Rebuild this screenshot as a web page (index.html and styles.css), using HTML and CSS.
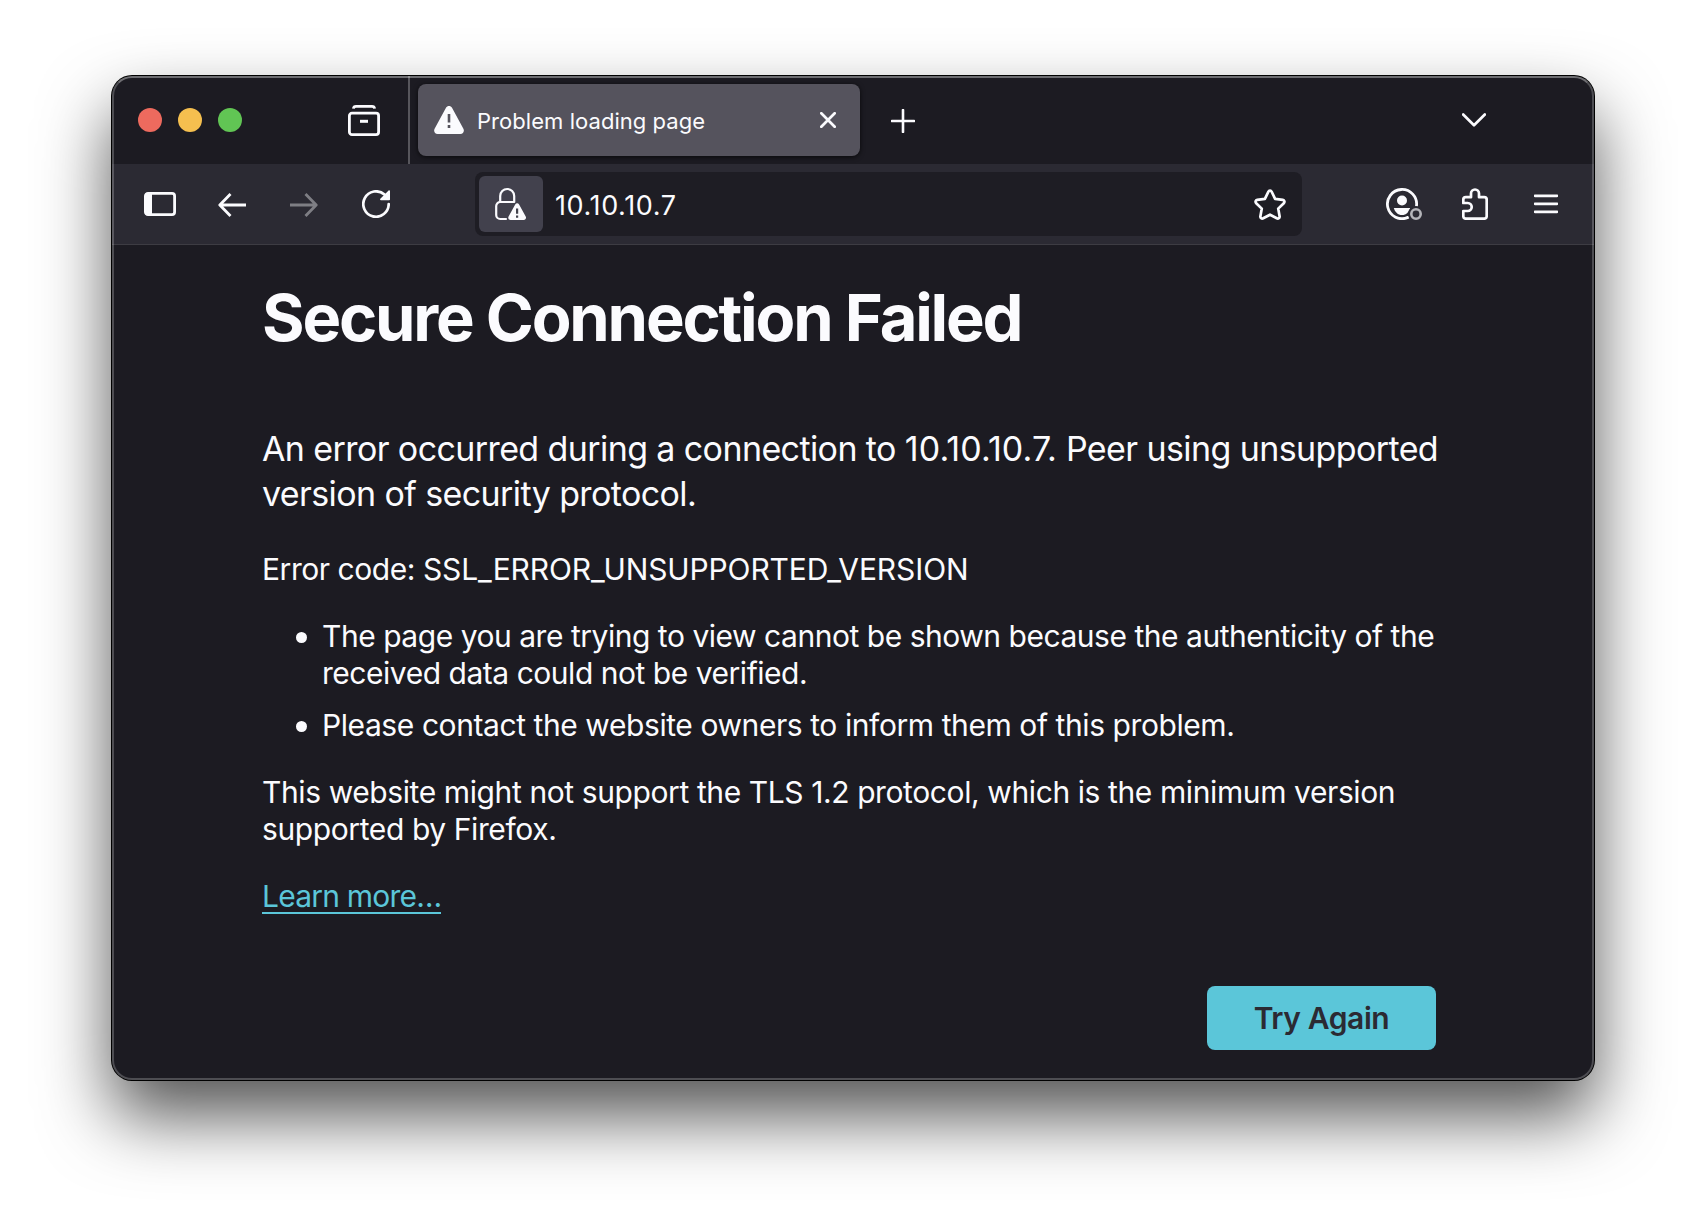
FILE: index.html
```html
<!DOCTYPE html>
<html lang="en">
<head>
<meta charset="utf-8">
<title>Problem loading page</title>
<link rel="stylesheet" href="styles.css">
</head>
<body>
<div class="window">
  <header class="tabbar">
    <div class="lights"><i class="light red"></i><i class="light yellow"></i><i class="light green"></i></div>
    <svg class="icon view" width="32" height="32" viewBox="0 0 32 32"><path d="M5.400 4.600C5.600 3.200 6.500 2.400 8 2.400h16c1.500 0 2.400.8 2.600 2.200" /><rect x="1.400" y="9.200" width="29.200" height="21.400" rx="2.600"/><path d="M12 17.300h8" stroke-width="3"/></svg>
    <div class="separator"></div>
    <div class="tab">
      <svg class="warn" width="30" height="28" viewBox="0 0 30 28"><path class="solid" d="M12 1.800c1.300-2.400 4.700-2.400 6 0l11.400 20.900c1.300 2.500-.2 5.300-3 5.300H3.600c-2.800 0-4.300-2.800-3-5.300z"/><path class="mark" d="M15 8v8.500M15 19v3"/></svg>
      <span class="tab-title">Problem loading page</span>
      <svg class="icon close" width="16" height="16" viewBox="0 0 16 16"><path d="M1.300 1.300l13.400 13.400M14.700 1.300L1.300 14.700"/></svg>
    </div>
    <svg class="icon plus" width="24" height="24" viewBox="0 0 24 24"><path d="M12 1v22M1 12h22"/></svg>
    <svg class="icon chevron" width="24" height="14" viewBox="0 0 24 14"><path d="M1.200 1.500L12 12.200 22.800 1.500"/></svg>
  </header>
  <nav class="toolbar">
    <svg class="icon sidebar" width="32" height="24" viewBox="0 0 32 24"><rect x="1.400" y="1.400" width="29.200" height="21.200" rx="2.600"/><path class="solid" d="M3 1h5v22H3a2 2 0 0 1-2-2V3a2 2 0 0 1 2-2z"/></svg>
    <svg class="icon back" width="28" height="26" viewBox="0 0 28 26"><path d="M28 13H1.800M12.500 2L1.800 13l10.700 11"/></svg>
    <svg class="icon forward" width="28" height="26" viewBox="0 0 28 26"><path d="M0 13h26.200M15.500 2l10.700 11-10.700 11"/></svg>
    <svg class="icon reload" width="28" height="28" viewBox="0 0 28 28"><path d="M26.700 14A12.700 12.700 0 1 1 22.500 4.600"/><path class="solid" d="M28 1.200v8.300a.8.800 0 0 1-.8.800h-8.300c-.8 0-1.100-.9-.6-1.500l8.300-8.200c.5-.5 1.400-.2 1.400.6z"/></svg>
    <div class="urlbar">
      <div class="identity">
        <svg class="icon" width="32" height="34" viewBox="0 0 32 34"><path d="M5.200 15V9a7 7 0 0 1 14 0v6M11 32H5.200a4 4 0 0 1-4-4v-9a4 4 0 0 1 4-4h13.500"/><path class="solid" d="M20.200 17.500c.9-1.700 3-1.700 3.900 0l6.600 12c.9 1.700-.2 3.500-2 3.500H15.600c-1.800 0-2.900-1.800-2-3.500z"/><path class="mark" d="M22.100 21.500v5.200M22.100 28.500v2.200"/></svg>
      </div>
      <span class="address">10.10.10.7</span>
      <svg class="icon star" width="32" height="32" viewBox="0 0 32 32"><path d="M14.300 2.800c.7-1.500 2.700-1.500 3.400 0l3.400 7 7.700 1.100c1.600.3 2.200 2.100 1 3.300l-5.600 5.400 1.400 7.700c.3 1.600-1.400 2.800-2.800 2L16 25.700l-6.800 3.600c-1.400.8-3.100-.4-2.800-2l1.400-7.700-5.600-5.400c-1.200-1.200-.6-3 1-3.300l7.700-1.100z"/></svg>
    </div>
    <svg class="icon account" width="36" height="32" viewBox="0 0 36 32"><path d="M30.500 18A14.600 14.600 0 1 0 22 29.400"/><circle class="solid" cx="16" cy="12.500" r="5"/><path class="solid" d="M7.800 20h16.400c-1.300 4.300-4 7-8.200 7s-6.900-2.700-8.200-7z"/><circle class="cut" cx="30" cy="26" r="8"/><circle class="status" cx="30" cy="26" r="4.700"/></svg>
    <svg class="icon puzzle" width="26" height="32" viewBox="0 0 26 32"><path d="M9 9.200V5.500a4 4 0 0 1 8 0v3.700h5.200a2.500 2.500 0 0 1 2.500 2.500v16.500a2.500 2.500 0 0 1-2.500 2.500H3.800a2.500 2.500 0 0 1-2.500-2.500V23h4.400a4 4 0 0 0 0-8H1.300v-3.300a2.500 2.500 0 0 1 2.500-2.500z"/></svg>
    <svg class="icon menu" width="24" height="20" viewBox="0 0 24 20"><path d="M1 1.800h22M1 9.800h22M1 17.800h22"/></svg>
  </nav>
  <main class="page">
    <h1>Secure Connection Failed</h1>
    <p class="lead">An error occurred during a connection to <span class="host">10.10.10.7.</span> Peer using unsupported<br>version of security protocol.</p>
    <p class="code">Error code: <span class="code-name">SSL_ERROR_UNSUPPORTED_VERSION</span></p>
    <ul>
      <li><span class="item-one">The page you are trying to view cannot be shown because the authenticity of the<br>received data could not be verified.</span></li>
      <li><span class="item-two">Please contact the website owners to inform them of this problem.</span></li>
    </ul>
    <p class="tls">This website might not support the TLS 1.2 protocol, which is the minimum version<br>supported by Firefox.</p>
    <a class="learn">Learn more…</a>
    <button class="retry">Try Again</button>
  </main>
</div>
</body>
</html>
```
FILE: styles.css
```css
* { box-sizing: border-box; }
body {
  margin: 0;
  height: 1228px;
  padding: 76px 112px 0;
  background: #fff;
  overflow: hidden;
  font-family: Inter, "Liberation Sans", sans-serif;
  color: #fbfbfe;
}
.window {
  position: relative;
  width: 1482px;
  height: 1004px;
  border-radius: 20px;
  background: #1c1b22;
  box-shadow: 0 0 0 1px #000, 0 36px 70px rgba(0,0,0,.68);
}
/* light rim lying over the chrome */
.window::after {
  content: "";
  position: absolute;
  inset: 0;
  border: 2px solid rgba(255,255,255,.22);
  border-top-color: rgba(255,255,255,.36);
  border-radius: 20px;
  pointer-events: none;
}
svg { display: block; flex: none; }
.icon { fill: none; stroke: #fbfbfe; stroke-width: 2.700; stroke-linecap: round; stroke-linejoin: round; }
.solid { fill: #fbfbfe; stroke: none; }
.mark { fill: none; stroke: #55535d; stroke-width: 2.600; stroke-linecap: butt; }
.identity .mark { stroke: #42414d; stroke-width: 2.200; }

.tabbar { display: flex; align-items: center; height: 88px; }
.lights { display: flex; gap: 16px; margin-left: 26px; }
.light { width: 24px; height: 24px; border-radius: 50%; }
.red { background: #ed6a5e; }
.yellow { background: #f5bf4f; }
.green { background: #61c554; }
.view { margin-left: 106px; stroke-width: 2.800; }
.view path { stroke-linecap: butt; }
.separator { width: 2px; height: 88px; margin-left: 28px; background: #57565c; }
.tab {
  display: flex;
  align-items: center;
  width: 442px;
  height: 72px;
  margin-left: 8px;
  padding: 0 24px 0 16px;
  border-radius: 8px;
  background: #55535d;
  box-shadow: 0 1px 5px rgba(0,0,0,.7);
}
.tab-title { margin: 2px 0 0 13px; font-size: 22px; line-height: 28px; letter-spacing: .05px; white-space: nowrap; }
.close { margin-left: auto; }
.plus { margin: 2px 0 0 31px; stroke-width: 2.600; }
.chevron { margin: 0 0 0 547px; }

.toolbar {
  display: flex;
  align-items: center;
  height: 81px;
  border-bottom: 1px solid #3d3c43;
  background: #2b2a33;
}
.sidebar { margin-left: 32px; stroke-width: 2.800; }
.back, .forward, .reload { margin-left: 42px; }
.back, .forward { margin-top: 1px; stroke-width: 2.800; stroke-linecap: butt; }
.forward { margin-left: 44px; opacity: .4; }
.reload { margin-left: 44px; }
.urlbar {
  display: flex;
  align-items: center;
  width: 827px;
  height: 64px;
  margin-left: 85px;
  padding: 0 16px 0 4px;
  border-radius: 8px;
  background: #1e1d24;
}
.identity {
  display: flex;
  align-items: center;
  justify-content: center;
  width: 64px;
  height: 56px;
  border-radius: 6px;
  background: #42414d;
}
.identity .icon { stroke-width: 2.200; }
.address { margin: 3px 0 0 12px; font-size: 27px; line-height: 34px; letter-spacing: .6px; }
.star { margin: 1px 0 0 auto; }
.account { margin-left: 84px; stroke-width: 2.800; }
.cut { fill: #2b2a33; stroke: none; }
.status { stroke: #b4b4b9; stroke-width: 2.600; }
.puzzle { margin-left: 40px; }
.menu { margin-left: 46px; }

.page { display: flex; flex-direction: column; padding: 34px 158px 0 150px; white-space: nowrap; }
.page p, .page h1, .page ul { margin: 0; padding: 0; }
h1 { font-size: 65px; line-height: 78px; font-weight: 700; letter-spacing: -2.18px; }
.page p, .page li, .learn { font-size: 30px; line-height: 37px; }
.page .lead { margin-top: 69px; font-size: 34px; line-height: 45px; letter-spacing: -.6px; }
.host { letter-spacing: .1px; }
.page .code { margin-top: 35px; letter-spacing: -.45px; }
.code-name { letter-spacing: -.11px; }
.page ul { display: flex; flex-direction: column; gap: 15px; margin-top: 30px; list-style: none; }
li { display: flex; }
li::before {
  content: "";
  flex: none;
  width: 11px;
  height: 11px;
  margin: 14px 15px 0 34px;
  border-radius: 50%;
  background: #fbfbfe;
}
.item-one { letter-spacing: -.47px; }
.item-two { letter-spacing: -.42px; }
.page .tls { margin-top: 30px; letter-spacing: -.4px; }
.learn {
  align-self: flex-start;
  margin-top: 30px;
  height: 36px;
  border-bottom: 2px solid #5bc6d9;
  color: #5bc6d9;
  letter-spacing: -.79px;
}
.retry {
  align-self: flex-end;
  width: 229px;
  height: 64px;
  margin-top: 72px;
  border: 0;
  border-radius: 8px;
  background: #5bc6d9;
  color: #2b2a33;
  font: 600 30px/37px Inter, "Liberation Sans", sans-serif;
  letter-spacing: -.4px;
}
```
